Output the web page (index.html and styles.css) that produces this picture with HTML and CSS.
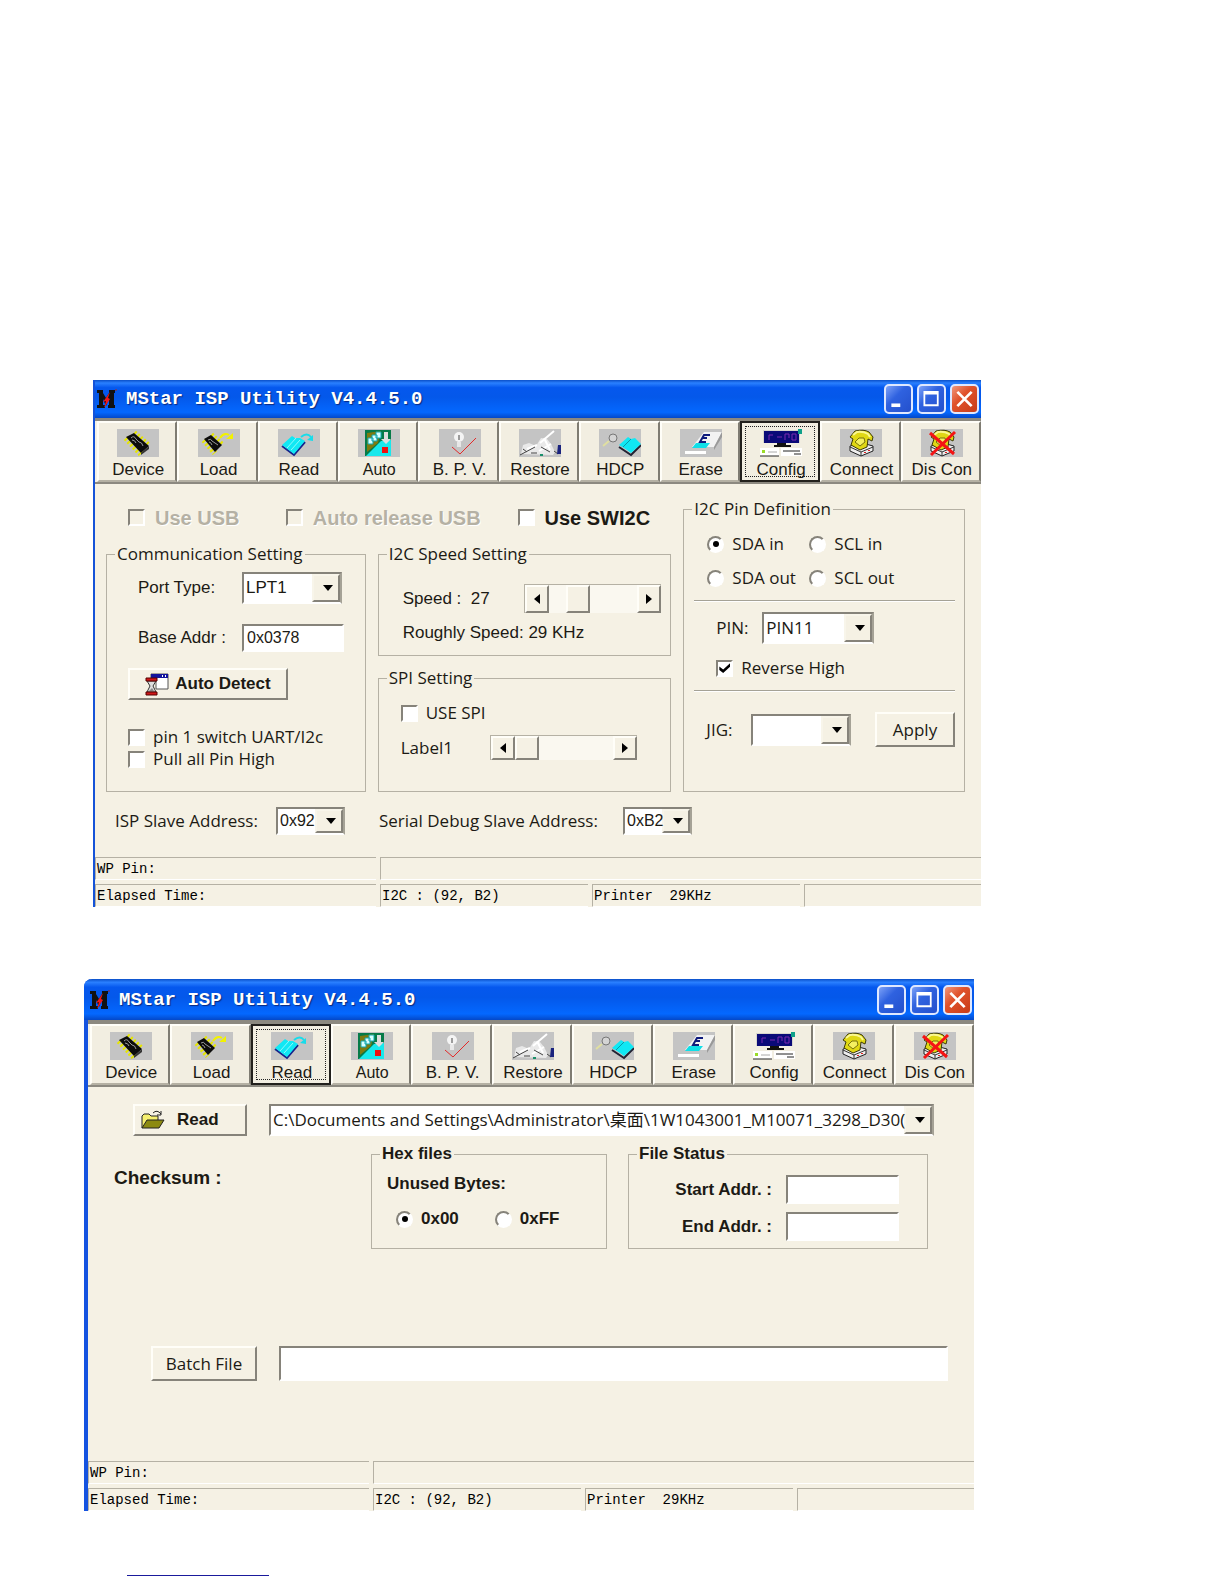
FILE: index.html
```
<!DOCTYPE html>
<html lang="en">
<head>
    <meta charset="UTF-8">
    <meta name="viewport" content="width=device-width, initial-scale=1.0">
    <title>MStar ISP Utility V4.4.5.0</title>
    <link rel="stylesheet" href="styles.css">
</head>
<body>

    <!-- Shared icons -->
    <svg class="sprite" aria-hidden="true">
        <symbol id="i-logo" viewBox="0 0 20 20">
            <path d="M0 1h6v3l3 5 3-5V1h6v3h-1v12h1v3h-7v-3h1V9l-3 8-3-7v6h2v3H0v-3h2V4H0z" fill="#111"/>
            <path d="M13 3l-2 6 2 1-6 9 2-7-3 1z" fill="#f01818"/>
            <path d="M18 1h2" stroke="#a22"/>
        </symbol>
        <symbol id="i-device" viewBox="0 0 42 28">
            <path fill="#c4c4c4" d="M0 0h42v28H0z"/>
            <path d="M9 9L24 25M17 4L32 17" stroke="#e6e600" stroke-width="6" stroke-dasharray="2 2"/>
            <path d="M9 8l8-4 15 13-8 7z" fill="#0c0c0c"/>
            <path d="M14 9q3-3 5 1l3 3q3 0 4 4M15 11q3 0 4 3" stroke="#999" fill="none"/>
            <path d="M32 17v3l-8 6v-2z" fill="#333"/>
        </symbol>
        <symbol id="i-load" viewBox="0 0 42 28">
            <path fill="#c4c4c4" d="M0 0h42v28H0z"/>
            <path d="M6 11L17 24M13 6L24 16" stroke="#e6e600" stroke-width="6" stroke-dasharray="2 2"/>
            <path d="M6 10l7-4 11 10-7 7z" fill="#0c0c0c"/>
            <path d="M10 11q3-2 4 1l6 4M11 13q2 0 3 3" stroke="#999" fill="none"/>
            <path d="M22 9q4-6 9-3" stroke="#f2f200" stroke-width="2" fill="none"/>
            <path d="M28 10h7V4z" fill="#f2f200"/>
        </symbol>
        <symbol id="i-read" viewBox="0 0 42 28">
            <path fill="#c4c4c4" d="M0 0h42v28H0z"/>
            <path d="M4 17l12 9 11-13" stroke="#16248c" stroke-width="2" fill="none"/>
            <path d="M4 16L14 7l3 2h5l5 3-11 13-4-3z" fill="#10e8f4"/>
            <path d="M18 9L9 19M22 11L13 21" stroke="#8ff8fc"/>
            <path d="M23 8q6-5 10 0" stroke="#18dcea" stroke-width="2" fill="none"/>
            <path d="M29 11l6-5v6z" fill="#18dcea"/>
        </symbol>
        <symbol id="i-auto" viewBox="0 0 42 28">
            <path fill="#c4c4c4" d="M0 0h42v28H0z"/>
            <path fill="#067a48" d="M7 1h26v26H7z"/>
            <path fill="#7d7a10" d="M9 4l14-2-3 12L9 23z"/>
            <path fill="#18e8ec" d="M8 27l15-15 10-1v16z"/>
            <path d="M10 9h5v6h-5zM14 6h5v6h-5zM18 3h5v6h-5z" fill="#d8ffff" stroke="#10a8b0"/>
            <path fill="#ddd" d="M26 3h4v7h3l-5 5-5-5h3z"/>
            <path fill="#f01010" d="M24 18h6v6h-6z"/>
        </symbol>
        <symbol id="i-bpv" viewBox="0 0 42 28">
            <path fill="#c4c4c4" d="M0 0h42v28H0z"/>
            <circle cx="20" cy="8" r="5" fill="#f4f4f4"/>
            <path d="M18 13h4v5h-4z" fill="#e8e8e8"/>
            <path d="M20 6v5" stroke="#444"/>
            <path d="M13 18l8 7L37 9" stroke="#e32a2a" fill="none"/>
        </symbol>
        <symbol id="i-restore" viewBox="0 0 42 28">
            <path fill="#c4c4c4" d="M0 0h42v28H0z"/>
            <path d="M2 25l2-9 6-2 7 3 5-8 6 1 4 5 4 8-2 3z" fill="#e9e9e9"/>
            <path d="M21 14L35 2M8 20l10-4M20 22l12-7M25 9l6 12" stroke="#fff" stroke-width="2"/>
            <path d="M1 26l15-8M4 20l4 3M22 18l9 5M35 22l4 3M12 24h6" stroke="#444"/>
            <path fill="#1a237e" d="M39 16h3v9h-4z"/>
            <path fill="#1a8f6a" d="M21 25h3v2h-3z"/>
        </symbol>
        <symbol id="i-hdcp" viewBox="0 0 42 28">
            <path fill="#c4c4c4" d="M0 0h42v28H0z"/>
            <circle cx="14" cy="9" r="4" fill="#d4d4d4" stroke="#777"/>
            <path d="M10 12l-6 5" stroke="#e0dfa0" stroke-width="2"/>
            <path d="M20 18l12 8 10-10" stroke="#223" stroke-width="2" fill="none"/>
            <path d="M20 16l9-8 3 2 4-1 6 6-10 9-4-3z" fill="#10e8f4"/>
            <path d="M32 10l-8 8" stroke="#0a9aa8"/>
        </symbol>
        <symbol id="i-erase" viewBox="0 0 42 28">
            <path fill="#c4c4c4" d="M0 0h42v28H0z"/>
            <path d="M24 3h18l-8 15H12z" fill="#f2f2f2"/>
            <path d="M34 18l8-15v5l-8 13z" fill="#999"/>
            <path d="M16 14h14l-4 5H12z" fill="#10dfe8"/>
            <path d="M30 6h-6l-4 7h6M22 9h5" stroke="#0e1a7c" stroke-width="2" fill="none"/>
            <path d="M5 22h21v3H5z" fill="#fff"/>
        </symbol>
        <symbol id="i-config" viewBox="0 0 42 28">
            <path fill="#d8d6cc" d="M3 1h37v13H3z"/>
            <path fill="#0a0a78" d="M4 2h35v12H4z"/>
            <path d="M9 11V6h4M17 8h5M25 11V5h4v4M32 11V5h4v6z" stroke="#7a28b0" fill="none"/>
            <path fill="#0fa08a" d="M38 0h4v5h-4z"/>
            <path fill="#111" d="M17 14h9v2h5v2H14v-2h3z"/>
            <path fill="#fff" d="M0 19h19v8H0zM21 19h21v8H21z"/>
            <path d="M0 27h19M23 22h17M34 25h7" stroke="#222"/>
            <path fill="#9bdc28" d="M2 21h3v3H2z"/>
            <path d="M8 23h9" stroke="#aaa"/>
        </symbol>
        <symbol id="i-phone" viewBox="0 0 42 28">
            <path fill="#c4c4c4" d="M0 0h42v28H0z"/>
            <path d="M10 17l12-3 11 3v5l-12 5-11-5z" fill="#eee" stroke="#222"/>
            <path d="M10 18l11 5 12-5M21 23v4" stroke="#333" fill="none"/>
            <path d="M10 8l5-6q9-2 14 1l4 5-1 4-4-2-1 8-7 3-9-5 2-6z" fill="#e0d814" stroke="#3c3a08"/>
            <path d="M13 6l4-3q6-1 11 2l2 3" stroke="#fbf890" stroke-width="2" fill="none"/>
            <path d="M15 13l4-4h5l1 4-5 4z" fill="#f4f060" stroke="#77720c"/>
            <path d="M24 23h2v1h-2zM28 21h2v1h-2z" fill="#e02020"/>
        </symbol>
        <symbol id="i-discon" viewBox="0 0 42 28">
            <use href="#i-phone" width="42" height="28"/>
            <path d="M9 4l24 21M34 3L10 26" stroke="#f41414" stroke-width="3"/>
        </symbol>
        <symbol id="i-detect" viewBox="0 0 24 24">
            <path d="M6 2h17v15H11V8H6z" fill="#fff" stroke="#555"/>
            <path d="M6 2h17v4H6z" fill="#14149c"/>
            <path d="M17 4h1M20 4h1" stroke="#fff" stroke-width="2"/>
            <path d="M2 9h9L8 14l3 6H2l3-6z" fill="#ddd" stroke="#333"/>
            <path d="M1 6h11v3H1zM1 20h11v3H1z" fill="#d01818" stroke="#500" stroke-width="1"/>
            <path d="M4 19l3-3 2 3z" fill="#888"/>
        </symbol>
        <symbol id="i-folder" viewBox="0 0 24 20">
            <path d="M1 18V6l2-2h5l2 2h7v4" fill="#f6f070" stroke="#222"/>
            <path d="M1 18l5-8h17l-5 8z" fill="#8c8a10" stroke="#222"/>
            <path d="M12 3q4-4 8 1M20 1v4h-4" stroke="#222" fill="none"/>
        </symbol>
        <symbol id="i-min" viewBox="0 0 28 28"><path d="M6 19h10v4H6z" fill="#fff"/></symbol>
        <symbol id="i-max" viewBox="0 0 28 28"><path d="M5 5h17v17H5zm2 4v11h13v-11z" fill="#fff" fill-rule="evenodd"/></symbol>
        <symbol id="i-close" viewBox="0 0 28 28"><path d="M6 6l16 16M22 6L6 22" stroke="#fff" stroke-width="3"/></symbol>
    </svg>

    <main class="page">

        <!-- Config window -->
        <section class="window config-window">
            <header class="titlebar">
                <svg class="logo"><use href="#i-logo"/></svg>
                <h1>MStar ISP Utility V4.4.5.0</h1>
                <button class="win-btn" aria-label="Minimize"><svg><use href="#i-min"/></svg></button>
                <button class="win-btn" aria-label="Maximize"><svg><use href="#i-max"/></svg></button>
                <button class="win-btn close" aria-label="Close"><svg><use href="#i-close"/></svg></button>
            </header>
            <nav class="toolbar">
                <button><svg><use href="#i-device"/></svg>Device</button>
                <button><svg><use href="#i-load"/></svg>Load</button>
                <button><svg><use href="#i-read"/></svg>Read</button>
                <button class="small"><svg><use href="#i-auto"/></svg>Auto</button>
                <button><svg><use href="#i-bpv"/></svg>B. P. V.</button>
                <button><svg><use href="#i-restore"/></svg>Restore</button>
                <button><svg><use href="#i-hdcp"/></svg>HDCP</button>
                <button><svg><use href="#i-erase"/></svg>Erase</button>
                <button class="active"><svg><use href="#i-config"/></svg>Config</button>
                <button><svg><use href="#i-phone"/></svg>Connect</button>
                <button><svg><use href="#i-discon"/></svg>Dis Con</button>
            </nav>

            <div class="config-grid">
                <div class="top-checks">
                    <label class="check"><input type="checkbox" disabled>Use USB</label>
                    <label class="check"><input type="checkbox" disabled>Auto release USB</label>
                    <label class="check"><input type="checkbox">Use SWI2C</label>
                </div>

                <fieldset class="comm">
                    <legend>Communication Setting</legend>
                    <div class="row port-row">
                        <label for="port">Port Type:</label>
                        <span class="combo"><select id="port"><option>LPT1</option></select></span>
                    </div>
                    <div class="row base-row">
                        <label for="base">Base Addr :</label>
                        <input type="text" id="base" value="0x0378">
                    </div>
                    <button class="btn detect-btn"><svg><use href="#i-detect"/></svg>Auto Detect</button>
                    <label class="check"><input type="checkbox">pin 1 switch UART/I2c</label>
                    <label class="check"><input type="checkbox">Pull all Pin High</label>
                </fieldset>

                <div class="speed-col">
                    <fieldset class="speed">
                        <legend>I2C Speed Setting</legend>
                        <div class="row">
                            <label for="speed">Speed :&nbsp; 27</label>
                            <div class="scroll">
                                <button class="left" aria-label="Slower"></button>
                                <input type="range" id="speed" value="27">
                                <button class="right" aria-label="Faster"></button>
                            </div>
                        </div>
                        <p>Roughly Speed: 29 KHz</p>
                    </fieldset>
                    <fieldset class="spi">
                        <legend>SPI Setting</legend>
                        <label class="check"><input type="checkbox">USE SPI</label>
                        <div class="row">
                            <label for="spi">Label1</label>
                            <div class="scroll">
                                <button class="left" aria-label="Less"></button>
                                <input type="range" id="spi" value="0">
                                <button class="right" aria-label="More"></button>
                            </div>
                        </div>
                    </fieldset>
                </div>

                <fieldset class="pins">
                    <legend>I2C Pin Definition</legend>
                    <div class="radios">
                        <label class="check"><input type="radio" name="pin-dir" checked>SDA in</label>
                        <label class="check"><input type="radio" name="pin-dir">SCL in</label>
                        <label class="check"><input type="radio" name="pin-dir">SDA out</label>
                        <label class="check"><input type="radio" name="pin-dir">SCL out</label>
                    </div>
                    <hr>
                    <div class="row pin-row">
                        <label for="pin">PIN:</label>
                        <span class="combo"><select id="pin"><option>PIN11</option></select></span>
                    </div>
                    <label class="check reverse"><input type="checkbox" checked>Reverse High</label>
                    <hr>
                    <div class="row jig-row">
                        <label for="jig">JIG:</label>
                        <span class="combo"><select id="jig"><option></option></select></span>
                        <button class="btn">Apply</button>
                    </div>
                </fieldset>

                <div class="row address-row">
                    <label class="isp-label" for="isp">ISP Slave Address:</label>
                    <span class="combo short"><select id="isp"><option>0x92</option></select></span>
                    <label class="debug-label" for="debug">Serial Debug Slave Address:</label>
                    <span class="combo short"><select id="debug"><option>0xB2</option></select></span>
                </div>
            </div>

            <footer class="status">
                <span>WP Pin:</span>
                <span class="wide"></span>
                <span>Elapsed Time:</span>
                <span>I2C : (92, B2)</span>
                <span>Printer&nbsp; 29KHz</span>
                <span></span>
            </footer>
        </section>

        <!-- Read window -->
        <section class="window read-window">
            <header class="titlebar">
                <svg class="logo"><use href="#i-logo"/></svg>
                <h1>MStar ISP Utility V4.4.5.0</h1>
                <button class="win-btn" aria-label="Minimize"><svg><use href="#i-min"/></svg></button>
                <button class="win-btn" aria-label="Maximize"><svg><use href="#i-max"/></svg></button>
                <button class="win-btn close" aria-label="Close"><svg><use href="#i-close"/></svg></button>
            </header>
            <nav class="toolbar">
                <button><svg><use href="#i-device"/></svg>Device</button>
                <button><svg><use href="#i-load"/></svg>Load</button>
                <button class="active"><svg><use href="#i-read"/></svg>Read</button>
                <button class="small"><svg><use href="#i-auto"/></svg>Auto</button>
                <button><svg><use href="#i-bpv"/></svg>B. P. V.</button>
                <button><svg><use href="#i-restore"/></svg>Restore</button>
                <button><svg><use href="#i-hdcp"/></svg>HDCP</button>
                <button><svg><use href="#i-erase"/></svg>Erase</button>
                <button><svg><use href="#i-config"/></svg>Config</button>
                <button><svg><use href="#i-phone"/></svg>Connect</button>
                <button><svg><use href="#i-discon"/></svg>Dis Con</button>
            </nav>

            <div class="read-panel">
                <div class="row file-row">
                    <button class="btn read-btn"><svg><use href="#i-folder"/></svg>Read</button>
                    <span class="combo"><select aria-label="File"><option>C:\Documents and Settings\Administrator\桌面\1W1043001_M10071_3298_D30(</option></select></span>
                </div>
                <div class="info-row">
                    <p class="checksum">Checksum :</p>
                    <fieldset class="hex">
                        <legend>Hex files</legend>
                        <p>Unused Bytes:</p>
                        <div class="hex-radios">
                            <label class="check"><input type="radio" name="fill" checked>0x00</label>
                            <label class="check"><input type="radio" name="fill">0xFF</label>
                        </div>
                    </fieldset>
                    <fieldset class="file-status">
                        <legend>File Status</legend>
                        <div class="row">
                            <label for="start">Start Addr. :</label>
                            <input type="text" id="start">
                        </div>
                        <div class="row">
                            <label for="end">End Addr. :</label>
                            <input type="text" id="end">
                        </div>
                    </fieldset>
                </div>
                <div class="row batch-row">
                    <button class="btn">Batch File</button>
                    <input type="text" aria-label="Batch File">
                </div>
            </div>

            <footer class="status">
                <span>WP Pin:</span>
                <span class="wide"></span>
                <span>Elapsed Time:</span>
                <span>I2C : (92, B2)</span>
                <span>Printer&nbsp; 29KHz</span>
                <span></span>
            </footer>
        </section>

        <a class="page-link" href="#" aria-label="Link"></a>
    </main>

</body>
</html>
```
FILE: styles.css
```
* {
    margin: 0;
    padding: 0;
    box-sizing: border-box;
}

body {
    background-color: #fff;
    color: #1c1a14;
    font-family: "Open Sans", "Noto Sans CJK SC", sans-serif;
    font-size: 17px;
    line-height: 20px;
}

button,
input,
select {
    font: inherit;
    color: inherit;
}

.sprite {
    display: none;
}

.page {
    padding: 380px 250px 0 84px;
}

/* Window frame */
.window {
    background-color: #f5f1e4;
}

.config-window {
    margin-left: 9px;
    margin-right: -7px;
    border-left: 2px solid #1553d8;
}

.read-window {
    margin-top: 72px;
    border-left: 4px solid #1553e0;
    border-top-left-radius: 8px;
}

.titlebar {
    display: flex;
    align-items: center;
    gap: 4px;
    height: 38px;
    padding: 0 2px;
    background: linear-gradient(#0a4fc8, #2a80ff 8%, #0558ee 20%, #0458ea 45%, #0468ff 85%, #0448c8);
}

.read-window .titlebar {
    height: 41px;
    margin-left: -4px;
    padding-left: 6px;
    border-top-left-radius: 8px;
}

.logo {
    width: 20px;
    height: 20px;
}

.titlebar h1 {
    flex: 1;
    padding-left: 5px;
    color: #fff;
    font-family: "Liberation Mono", monospace;
    font-size: 19px;
    text-shadow: 1px 1px 1px #0a2a80;
}

.win-btn {
    width: 29px;
    height: 30px;
    border: 2px solid #dfe8ff;
    border-radius: 5px;
    background: linear-gradient(135deg, #7da2f8, #2f62e0 40%, #2450cc);
}

.win-btn.close {
    background: linear-gradient(135deg, #f0977c, #e0522c 40%, #c83c18);
}

.win-btn svg {
    display: block;
    width: 100%;
    height: 26px;
}

/* Toolbar */
.toolbar {
    display: grid;
    grid-template-columns: repeat(11, 1fr);
    padding-left: 2px;
    border-top: 3px solid #8c8980;
    border-bottom: 2px solid #8c8980;
}

.read-window .toolbar {
    border-top-width: 4px;
}

.toolbar button {
    display: flex;
    flex-direction: column;
    align-items: center;
    height: 61px;
    padding: 6px 0 0 2px;
    border: 2px solid;
    border-color: #fffef8 #7f7c72 #b5b1a4 #fffef8;
    background-color: #f2eee1;
    font-family: "Liberation Sans", sans-serif;
    font-size: 17px;
    line-height: 26px;
    white-space: nowrap;
}

.toolbar .small {
    font-size: 16px;
}

.toolbar .active {
    border-color: #22201c;
    outline: 1px dotted #222;
    outline-offset: -6px;
}

.toolbar svg {
    flex: none;
    width: 42px;
    height: 28px;
}

/* Controls */
.row {
    display: flex;
    align-items: center;
}

.btn {
    display: flex;
    align-items: center;
    justify-content: center;
    border: 2px solid;
    border-color: #fffef8 #86837a #86837a #fffef8;
    background-color: #f5f1e4;
}

input[type="text"] {
    min-width: 0;
    padding: 0 3px;
    border: 2px solid;
    border-color: #86837a #fff #fff #86837a;
    background-color: #fff;
    font-family: "Liberation Sans", sans-serif;
    font-size: 16px;
}

.combo {
    display: grid;
    align-items: stretch;
    height: 32px;
    border: 2px solid;
    border-color: #86837a #a5a296 #fff #86837a;
    background-color: #fff;
}

.combo select {
    grid-area: 1 / 1;
    width: 100%;
    min-width: 0;
    padding: 0 24px 0 2px;
    border: none;
    background: none;
    appearance: none;
}

.combo::before {
    content: "";
    grid-area: 1 / 1;
    justify-self: end;
    width: 24px;
    border: 2px solid;
    border-color: #f8f5ea #86837a #86837a #f8f5ea;
    background-color: #f5f1e4;
    pointer-events: none;
}

.combo::after {
    content: "";
    grid-area: 1 / 1;
    place-self: center end;
    margin-right: 7px;
    border: 5px solid transparent;
    border-top: 6px solid #000;
    border-bottom: none;
    pointer-events: none;
}

.combo.short {
    height: 28px;
}

.check {
    display: flex;
    align-items: center;
    gap: 8px;
    white-space: nowrap;
}

.check input {
    display: grid;
    place-items: center;
    flex: none;
    width: 17px;
    height: 17px;
    border: 2px solid;
    border-color: #86837a #fff #fff #86837a;
    background-color: #fff;
    appearance: none;
}

.check input:disabled {
    background-color: #f5f1e4;
}

.check input[type="checkbox"]:checked::before {
    content: "";
    width: 11px;
    height: 10px;
    background-color: #000;
    clip-path: polygon(0 35%, 35% 65%, 100% 0, 100% 35%, 35% 100%, 0 70%);
}

.check input[type="radio"] {
    border-radius: 50%;
}

.check input[type="radio"]:checked::before {
    content: "";
    width: 6px;
    height: 6px;
    border-radius: 50%;
    background-color: #000;
}

.scroll {
    display: flex;
    flex: 1;
    min-width: 0;
    height: 29px;
    border-top: 1px solid #b5b1a4;
    border-left: 1px solid #b5b1a4;
    background-color: #faf8f0;
}

.scroll button {
    display: grid;
    place-items: center;
    flex: none;
    width: 24px;
    border: 2px solid;
    border-color: #fffef8 #86837a #86837a #fffef8;
    background-color: #f5f1e4;
}

.scroll button::before {
    content: "";
    border: 5px solid transparent;
}

.scroll .left::before {
    border-left: none;
    border-right: 6px solid #000;
}

.scroll .right::before {
    border-right: none;
    border-left: 6px solid #000;
}

.scroll input {
    flex: 1;
    min-width: 0;
    background: none;
    appearance: none;
}

.scroll input::-webkit-slider-thumb {
    width: 24px;
    height: 28px;
    border: 2px solid;
    border-color: #fffef8 #86837a #86837a #fffef8;
    background-color: #f5f1e4;
    appearance: none;
}

fieldset {
    --indent: 10px;
    min-width: 0;
    padding-left: var(--indent);
    border: 1px solid #b5b1a4;
}

legend {
    margin-left: calc(8px - var(--indent));
    padding: 0 2px;
}

/* Config window */
.config-grid {
    display: grid;
    grid-template-columns: minmax(0, 260fr) minmax(0, 294fr) minmax(0, 282fr);
    column-gap: 12px;
    padding: 15px 16px 22px 11px;
}

.top-checks {
    grid-column: 1 / 3;
    display: grid;
    grid-template-columns: minmax(0, 158fr) minmax(0, 232fr) minmax(0, 154fr);
    align-items: center;
    height: 45px;
    padding: 0 0 8px 22px;
    font-family: "Liberation Sans", sans-serif;
    font-size: 20px;
    font-weight: bold;
}

.top-checks .check {
    gap: 10px;
}

.top-checks .check:has(:disabled) {
    color: #b5b1a4;
    text-shadow: 1px 1px 0 #fff;
}

.comm {
    --indent: 21px;
    grid-column: 1;
    padding-top: 8px;
    padding-bottom: 21px;
}

.comm .row {
    padding-left: 10px;
}

.comm .row label {
    width: 104px;
    font-family: "Liberation Sans", sans-serif;
}

.port-row .combo {
    width: 100px;
    font-family: "Liberation Sans", sans-serif;
}

.base-row {
    margin-top: 20px;
}

.base-row input {
    width: 102px;
    height: 28px;
}

.detect-btn {
    gap: 6px;
    width: 160px;
    height: 32px;
    margin: 16px 0 26px;
    font-family: "Liberation Sans", sans-serif;
    font-weight: bold;
}

.detect-btn svg {
    width: 24px;
    height: 24px;
}

.comm .check {
    height: 22px;
}

.speed-col {
    display: flex;
    flex-direction: column;
    gap: 12px;
}

.speed {
    --indent: 24px;
    padding-top: 20px;
    padding-right: 9px;
    padding-bottom: 12px;
    font-family: "Liberation Sans", sans-serif;
}

.speed legend {
    font-family: "Open Sans", sans-serif;
}

.speed .row label {
    width: 121px;
}

.speed p {
    margin-top: 10px;
}

.spi {
    --indent: 22px;
    flex: 1;
    padding-top: 15px;
    padding-right: 33px;
    padding-bottom: 31px;
}

.spi .row {
    margin-top: 12px;
}

.spi .row label {
    width: 89px;
}

.spi .scroll {
    height: 25px;
}

.spi .scroll input::-webkit-slider-thumb {
    height: 24px;
}

.pins {
    grid-column: 3;
    grid-row: 1 / 3;
    padding-top: 15px;
    padding-right: 9px;
    padding-bottom: 20px;
}

.radios {
    display: grid;
    grid-template-columns: 102px 1fr;
    row-gap: 14px;
    padding-left: 13px;
}

.pins hr {
    border: none;
    border-top: 1px solid #a5a296;
    border-bottom: 1px solid #fff;
    margin: 12px 0 10px;
}

.pin-row {
    padding-left: 22px;
}

.pin-row label {
    width: 46px;
}

.pin-row .combo {
    width: 112px;
}

.reverse {
    margin-top: 14px;
    padding-left: 22px;
}

.jig-row {
    margin-top: 20px;
    padding-left: 12px;
}

.jig-row label {
    width: 45px;
}

.jig-row .combo {
    width: 100px;
}

.jig-row .btn {
    width: 80px;
    height: 35px;
    margin-left: auto;
}

.address-row {
    grid-column: 1 / 4;
    margin-top: 15px;
    padding-left: 9px;
}

.isp-label {
    width: 161px;
}

.debug-label {
    width: 244px;
    margin-left: 34px;
}

.address-row .combo {
    width: 69px;
    font-family: "Liberation Sans", sans-serif;
    font-size: 16px;
}

.address-row .combo::before {
    width: 24px;
}

/* Read window */
.read-panel {
    padding: 17px 26px 80px;
}

.file-row {
    gap: 22px;
    padding: 0 14px 0 19px;
}

.read-btn {
    justify-content: flex-start;
    gap: 12px;
    width: 114px;
    height: 32px;
    padding-left: 6px;
    font-family: "Liberation Sans", sans-serif;
    font-weight: bold;
}

.read-btn svg {
    width: 24px;
    height: 20px;
}

.file-row .combo {
    flex: 1;
    min-width: 0;
}

.info-row {
    display: grid;
    grid-template-columns: 257px minmax(0, 236fr) minmax(0, 321fr);
    margin-top: 8px;
    padding-right: 20px;
    font-family: "Liberation Sans", sans-serif;
    font-weight: bold;
}

.checksum {
    padding-top: 24px;
    font-size: 19px;
}

.hex {
    --indent: 15px;
    padding-top: 10px;
    padding-bottom: 19px;
}

.hex-radios {
    display: flex;
    gap: 36px;
    margin-top: 15px;
    padding-left: 9px;
}

.file-status {
    margin-left: 21px;
    padding-top: 11px;
    padding-right: 28px;
    padding-bottom: 7px;
}

.file-status .row {
    justify-content: flex-end;
    gap: 14px;
}

.file-status .row + .row {
    margin-top: 8px;
}

.file-status input {
    width: 113px;
    height: 29px;
}

.batch-row {
    gap: 22px;
    margin-top: 97px;
    padding-left: 37px;
}

.batch-row .btn {
    width: 106px;
    height: 35px;
}

.batch-row input {
    flex: 1;
    height: 35px;
}

/* Status bar */
.status {
    display: grid;
    grid-template-columns: 281px 208px 208px 1fr;
    gap: 4px;
    font-family: "Liberation Mono", monospace;
    font-size: 14px;
    line-height: 22px;
    color: #000;
}

.status span {
    height: 23px;
    padding-left: 1px;
    border-top: 1px solid #b5b1a4;
    border-left: 1px solid #b5b1a4;
    border-bottom: 1px solid #fff;
}

.status .wide {
    grid-column: 2 / 5;
}

.page-link {
    display: block;
    width: 142px;
    height: 65px;
    margin-left: 43px;
    border-bottom: 1px solid #1a1a9c;
}
```
